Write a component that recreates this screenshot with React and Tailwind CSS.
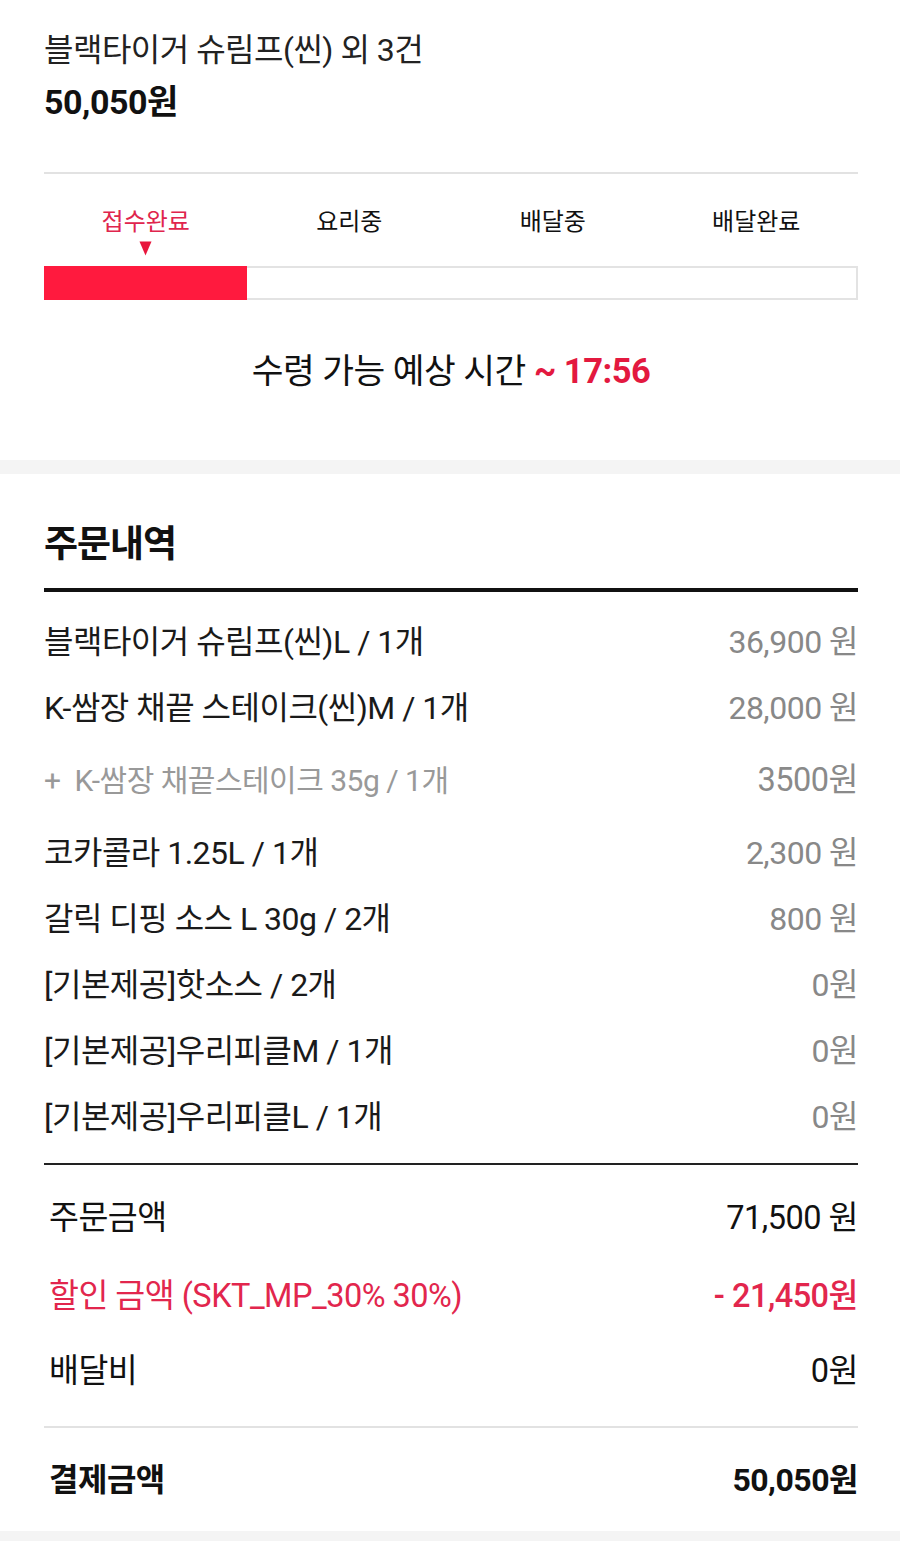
const FONT = "font-['Roboto','Noto_Sans_CJK_KR',sans-serif]";

const items = [
  { name: '블랙타이거 슈림프(씬)L / 1개', price: '36,900 원' },
  { name: 'K-쌈장 채끝 스테이크(씬)M / 1개', price: '28,000 원' },
  { name: '+  K-쌈장 채끝스테이크 35g / 1개', price: '3500원', option: true },
  { name: '코카콜라 1.25L / 1개', price: '2,300 원' },
  { name: '갈릭 디핑 소스 L 30g / 2개', price: '800 원' },
  { name: '[기본제공]핫소스 / 2개', price: '0원' },
  { name: '[기본제공]우리피클M / 1개', price: '0원' },
  { name: '[기본제공]우리피클L / 1개', price: '0원' },
];

const steps = ['접수완료', '요리중', '배달중', '배달완료'];

export default function App() {
  return (
    <div className={`${FONT} w-[900px] min-h-[1541px] bg-white text-[#111]`}>
      {/* Order summary */}
      <section className="pl-[44px] pr-[42px] pt-[30px]">
        <div className="h-[40px] leading-[40px] text-[32px] tracking-[-0.5px] text-[#222]">
          블랙타이거 슈림프(씬) 외 3건
        </div>
        <div className="h-[64px] leading-[64px] text-[34px] font-bold tracking-[-0.5px]">50,050원</div>

        <div className="mt-[38px] h-[2px] bg-[#e2e2e2]" />

        {/* Steps */}
        <div className="grid grid-cols-4 pt-[32px]">
          {steps.map((s, i) => (
            <div key={s} className="flex flex-col items-center">
              <div className={`h-[32px] leading-[32px] text-[24px] ${i === 0 ? 'text-[#e0254d]' : 'text-[#111]'}`}>{s}</div>
              <div className="h-[28px] flex items-start justify-center">
                {i === 0 && (
                  <svg width="13" height="15" viewBox="0 0 13 15" className="mt-[3px]">
                    <path d="M0.5 0.5 L12.5 0.5 L6.5 14.5 Z" fill="#e8173d" />
                  </svg>
                )}
              </div>
            </div>
          ))}
        </div>
        <div className="h-[34px] border-2 border-[#e3e3e3] flex">
          <div className="w-1/4 bg-[#ff1a3e] -my-[2px] -ml-[2px]" />
        </div>

        <div className="mt-[49px] h-[44px] leading-[44px] text-center text-[34.5px] tracking-[-0.5px] text-[#111]">
          수령 가능 예상 시간 <span className="font-bold text-[#e3193f]">~ 17:56</span>
        </div>
      </section>

      <div className="mt-[67px] h-[14px] bg-[#f4f4f4]" />

      {/* Order details */}
      <section className="pl-[44px] pr-[42px]">
        <h2 className="mt-[49px] h-[44px] leading-[44px] text-[37px] font-bold tracking-[-1px]">주문내역</h2>
        <div className="mt-[21px] h-[4px] bg-[#111]" />

        <div className="pt-[17px]">
          {items.map((it) => (
            <div
              key={it.name}
              className={`flex items-center justify-between tracking-[-0.5px] ${it.option ? 'h-[79px] text-[30px] text-[#999]' : 'h-[66px] text-[32px] text-[#1a1a1a]'}`}
            >
              <span className="whitespace-pre">{it.name}</span>
              <span className={it.option ? 'text-[32.5px] text-[#8a8a8a]' : 'text-[#888]'}>{it.price}</span>
            </div>
          ))}
        </div>

        <div className="mt-[13px] h-[2px] bg-[#222]" />

        <div className="pt-[15px] text-[32.5px] tracking-[-0.5px]">
          <div className="h-[76px] flex items-center justify-between pl-[5px]">
            <span>주문금액</span>
            <span>71,500 원</span>
          </div>
          <div className="h-[80px] flex items-center justify-between pl-[5px] text-[#e2264d]">
            <span>할인 금액 (SKT_MP_30% 30%)</span>
            <span className="font-medium">- 21,450원</span>
          </div>
          <div className="h-[70px] flex items-center justify-between pl-[5px]">
            <span>배달비</span>
            <span>0원</span>
          </div>
        </div>

        <div className="mt-[20px] h-[2px] bg-[#e2e2e2]" />

        <div className="h-[103px] flex items-center justify-between pl-[5px] text-[32px] font-bold tracking-[-0.5px]">
          <span>결제금액</span>
          <span>50,050원</span>
        </div>
      </section>

      <div className="h-[20px] bg-[#f4f4f4]" />
    </div>
  );
}
